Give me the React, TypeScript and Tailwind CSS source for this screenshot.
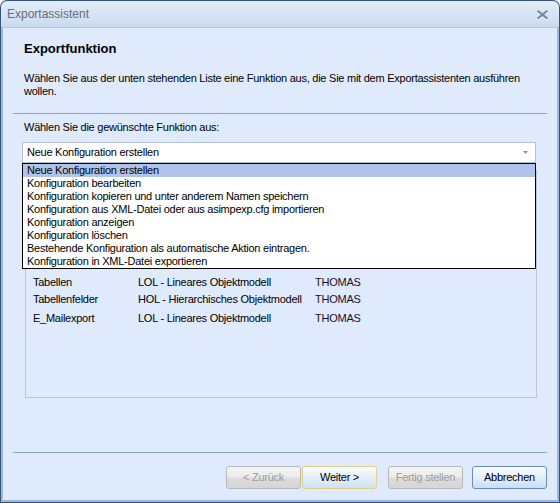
import React from "react";

const items = [
  "Neue Konfiguration erstellen",
  "Konfiguration bearbeiten",
  "Konfiguration kopieren und unter anderem Namen speichern",
  "Konfiguration aus XML-Datei oder aus asimpexp.cfg importieren",
  "Konfiguration anzeigen",
  "Konfiguration löschen",
  "Bestehende Konfiguration als automatische Aktion eintragen.",
  "Konfiguration in XML-Datei exportieren",
];

const rows = [
  { name: "Tabellen", model: "LOL - Lineares Objektmodell", user: "THOMAS", h: "h-[17px]" },
  { name: "Tabellenfelder", model: "HOL - Hierarchisches Objektmodell", user: "THOMAS", h: "h-[17px]" },
  { name: "E_Mailexport", model: "LOL - Lineares Objektmodell", user: "THOMAS", h: "h-[20px]" },
];

function DisabledButton({ label }: { label: string }) {
  return (
    <div className="flex h-[23px] w-[75px] items-center justify-center rounded-[3px] border border-[#b6b9bc] bg-[linear-gradient(to_bottom,#f4f4f4_0%,#ececec_48%,#dcdcdc_52%,#d6d6d6_100%)] text-[11px] tracking-[-0.25px] text-[#9c9c9c]">
      {label}
    </div>
  );
}

export default function App() {
  return (
    <div className="h-[503px] w-[560px] rounded-t-[7px] bg-[#35537d] p-px font-['Liberation_Sans',Arial,sans-serif] text-black">
      <div className="flex h-full flex-col overflow-hidden rounded-t-[6px]">
        {/* Title bar */}
        <div className="flex h-[27px] shrink-0 items-center border-b border-[#abc5e7] bg-gradient-to-b from-[#e4edf9] to-[#c9dbf1] pl-[6px] pr-[11px]">
          <span className="text-[12px] leading-[14px] text-[#686c7b]">Exportassistent</span>
          <svg className="ml-auto mt-[1px]" width="11" height="10" viewBox="0 0 11 10">
            <g stroke="#ffffff" strokeWidth="2.2" strokeLinecap="square" opacity="0.9">
              <line x1="1.5" y1="2.5" x2="9.5" y2="9" />
              <line x1="9.5" y1="2.5" x2="1.5" y2="9" />
            </g>
            <g stroke="#7b89a0" strokeWidth="2.2" strokeLinecap="square">
              <line x1="1.5" y1="1.5" x2="9.5" y2="8" />
              <line x1="9.5" y1="1.5" x2="1.5" y2="8" />
            </g>
          </svg>
        </div>

        {/* Body */}
        <div className="flex flex-1 flex-col border-x-2 border-b-2 border-[#9db8dd] bg-[#dfebfc] text-[11px] tracking-[-0.25px]">
          <div className="pl-[21px]">
            <div className="mt-[13px] text-[13px] font-bold leading-[16px] tracking-normal">Exportfunktion</div>
            <div className="mt-[15px] leading-[13px]">
              <div className="whitespace-nowrap">
                Wählen Sie aus der unten stehenden Liste eine Funktion aus, die Sie mit dem Exportassistenten ausführen
              </div>
              <div className="whitespace-nowrap">wollen.</div>
            </div>
          </div>

          <div className="mx-[10px] mt-[15px] h-px bg-[#84a8d4]" />

          <div className="ml-[21px] mt-[7px] leading-[13px]">Wählen Sie die gewünschte Funktion aus:</div>

          {/* Combobox with open dropdown */}
          <div className="relative ml-[19px] mt-[8px] w-[514px]">
            <div className="flex h-[21px] items-center border border-[#b3c0d2] bg-white pl-[4px] pr-[7px]">
              <span>Neue Konfiguration erstellen</span>
              <svg className="ml-auto" width="5" height="3" viewBox="0 0 5 3">
                <polygon points="0,0 5,0 2.5,3" fill="#8a95a6" />
              </svg>
            </div>
            <div className="absolute left-0 top-full z-10 w-[514px] border border-black bg-white">
              {items.map((it, i) => (
                <div
                  key={it}
                  className={
                    i === 0
                      ? "h-[13px] whitespace-nowrap bg-[#b0c4e9] pl-[4px] leading-[13px]"
                      : "h-[13px] whitespace-nowrap pl-[4px] leading-[13px]"
                  }
                >
                  {it}
                </div>
              ))}
            </div>
          </div>

          {/* List panel */}
          <div className="ml-[22px] mt-[7px] h-[228px] w-[512px] border border-[#bac7d9] bg-[#dfebfc] pl-[7px] pt-[103px]">
            {rows.map((r) => (
              <div key={r.name} className={`flex items-center ${r.h}`}>
                <div className="w-[105px] whitespace-nowrap">{r.name}</div>
                <div className="w-[177px] whitespace-nowrap">{r.model}</div>
                <div className="whitespace-nowrap text-[#1c0d2a]">{r.user}</div>
              </div>
            ))}
          </div>

          <div className="mx-[10px] mt-[54px] h-px bg-[#84a8d4]" />

          {/* Buttons */}
          <div className="mr-[10px] mt-[13px] flex justify-end">
            <DisabledButton label="< Zurück" />
            <div className="ml-[1px] flex h-[23px] w-[75px] items-center justify-center rounded-[3px] border border-[#e3cf86] bg-gradient-to-b from-[#fbfdff] to-[#cde1f6]">
              Weiter &gt;
            </div>
            <div className="ml-[11px]">
              <DisabledButton label="Fertig stellen" />
            </div>
            <div className="ml-[9px] flex h-[23px] w-[75px] items-center justify-center rounded-[3px] border border-[#6a8cb9] bg-gradient-to-b from-[#fbfdff] to-[#c9def5]">
              Abbrechen
            </div>
          </div>
        </div>
      </div>
    </div>
  );
}
